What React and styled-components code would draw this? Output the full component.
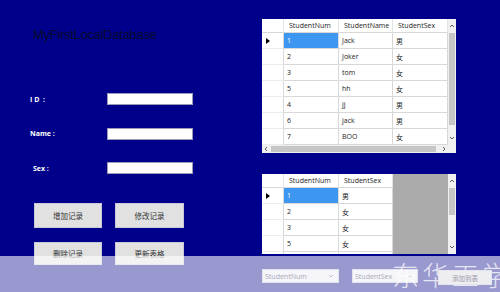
import React from 'react';
import styled, { createGlobalStyle } from 'styled-components';

const GlobalStyle = createGlobalStyle`
  html, body {
    margin: 0;
    padding: 0;
    background: #00008b;
  }
  body {
    font-family: "Open Sans", "Noto Sans CJK SC", sans-serif;
  }
`;

const gridOne = {
  columns: ['StudentNum', 'StudentName', 'StudentSex'],
  widths: '22px 55px 54px 55px',
  rows: [
    ['1', 'Jack', '男'],
    ['2', 'Joker', '女'],
    ['3', 'tom', '女'],
    ['5', 'hh', '女'],
    ['4', 'jj', '男'],
    ['6', 'jack', '男'],
    ['7', 'BOO', '女']
  ]
};

const gridTwo = {
  columns: ['StudentNum', 'StudentSex'],
  widths: '22px 55px 54px',
  rows: [
    ['1', '男'],
    ['2', '女'],
    ['3', '女'],
    ['5', '女'],
    ['4', '男']
  ]
};

const Arrow = ({ dir }) => {
  const paths = {
    up: 'M1 4 L3 2 L5 4',
    down: 'M1 2 L3 4 L5 2',
    left: 'M4 1 L2 3 L4 5',
    right: 'M2 1 L4 3 L2 5'
  };
  return (
    <svg width="6" height="6" viewBox="0 0 6 6">
      <path d={paths[dir]} fill="none" stroke="#606060" strokeWidth="1" />
    </svg>
  );
};

const DataGrid = ({ data, height, hScroll, thumb }) => (
  <GridFrame $height={height} $hScroll={hScroll}>
    <Table $widths={data.widths}>
      <HeaderCell />
      {data.columns.map(c => <HeaderCell key={c} $text>{c}</HeaderCell>)}
      {data.rows.map((row, i) => (
        <React.Fragment key={i}>
          <RowHeader>
            {i === 0 && (
              <svg width="4" height="6" viewBox="0 0 4 6">
                <path d="M0 0 L4 3 L0 6 Z" fill="#000" />
              </svg>
            )}
          </RowHeader>
          {row.map((v, j) => (
            <Cell key={j} $selected={i === 0 && j === 0}>{v}</Cell>
          ))}
        </React.Fragment>
      ))}
    </Table>
    <VScroll>
      <ArrowBox><Arrow dir="up" /></ArrowBox>
      <Track>
        <Thumb style={{ height: thumb[1], marginTop: thumb[0] }} />
      </Track>
      <ArrowBox><Arrow dir="down" /></ArrowBox>
    </VScroll>
    {hScroll && (
      <>
        <HScroll>
          <ArrowBox $h><Arrow dir="left" /></ArrowBox>
          <HTrack><HThumb /></HTrack>
          <ArrowBox $h><Arrow dir="right" /></ArrowBox>
        </HScroll>
        <Corner />
      </>
    )}
  </GridFrame>
);

const App = () => (
  <Page>
    <GlobalStyle />
    <LeftPane>
      <Title>MyFirstLocalDatabase</Title>
      <Form>
        <Label>I D&nbsp; :</Label>
        <Field />
        <Label>Name :</Label>
        <Field />
        <Label $indent>Sex :</Label>
        <Field />
      </Form>
      <Buttons>
        <ActionButton $h={25}>增加记录</ActionButton>
        <ActionButton $h={25}>修改记录</ActionButton>
        <ActionButton $h={23}>删除记录</ActionButton>
        <ActionButton $h={23}>更新表格</ActionButton>
      </Buttons>
    </LeftPane>
    <RightPane>
      <DataGrid data={gridOne} height={134} hScroll thumb={[0, 92]} />
      <DataGrid data={gridTwo} height={80} thumb={[0, 27]} />
    </RightPane>
    <Overlay>
      <Watermark>东华工学网</Watermark>
      <Combo $w={77}>StudentNum<Arrow dir="down" /></Combo>
      <Combo $w={66}>StudentSex<Arrow dir="down" /></Combo>
      <SmallButton>添加到表</SmallButton>
    </Overlay>
  </Page>
);

const Page = styled.div`
  position: relative;
  display: flex;
  width: 500px;
  height: 292px;
  overflow: hidden;
  background: #00008b;
`;

const LeftPane = styled.div`
  width: 232px;
  padding: 28px 0 0 30px;
  display: flex;
  flex-direction: column;
`;

const Title = styled.div`
  font-family: "Liberation Sans", Arial, sans-serif;
  font-size: 13px;
  line-height: 14px;
  letter-spacing: -0.3px;
  color: #08082e;
  padding-left: 3px;
`;

const Form = styled.div`
  display: grid;
  grid-template-columns: 77px 86px;
  grid-auto-rows: 12px;
  row-gap: 22.5px;
  margin-top: 51px;
  align-items: center;
`;

const Label = styled.div`
  font-family: "Open Sans", sans-serif;
  font-weight: 700;
  font-size: 7px;
  color: #ffffff;
  padding-left: ${p => (p.$indent ? '3px' : '0')};
  white-space: nowrap;
`;

const Field = styled.div`
  height: 12px;
  box-sizing: border-box;
  background: #ffffff;
  border: 1px solid #9a9ab8;
`;

const Buttons = styled.div`
  display: grid;
  grid-template-columns: 68px 69px;
  grid-template-rows: 25px 23px;
  column-gap: 13px;
  row-gap: 14px;
  margin: 29px 0 0 4px;
`;

const ActionButton = styled.div`
  height: ${p => p.$h}px;
  box-sizing: border-box;
  background: #e1e1e1;
  border: 1px solid #c8c8d8;
  display: flex;
  align-items: center;
  justify-content: center;
  font-family: "Noto Sans CJK SC", sans-serif;
  font-size: 7.5px;
  color: #333;
`;

const RightPane = styled.div`
  display: flex;
  flex-direction: column;
  gap: 21px;
  padding-top: 19px;
`;

const GridFrame = styled.div`
  width: 194px;
  height: ${p => p.$height}px;
  display: grid;
  grid-template-columns: 186px 8px;
  grid-template-rows: ${p => (p.$hScroll ? '1fr 8px' : '1fr')};
  background: #ffffff;
  overflow: hidden;
`;

const Table = styled.div`
  display: grid;
  grid-template-columns: ${p => p.$widths};
  grid-template-rows: 14px;
  grid-auto-rows: 16px;
  align-content: start;
  background: #ababab;
  overflow: hidden;
  font-family: "Open Sans", "Noto Sans CJK SC", sans-serif;
  font-size: 7px;
  color: #222;
`;

const HeaderCell = styled.div`
  background: #ffffff;
  border-right: 1px solid #e4e4e4;
  border-bottom: 1px solid #d8d8d8;
  box-sizing: border-box;
  display: flex;
  align-items: center;
  padding-left: ${p => (p.$text ? '5px' : '0')};
  white-space: nowrap;
`;

const RowHeader = styled.div`
  background: #ffffff;
  border-right: 1px solid #d8d8d8;
  border-bottom: 1px solid #ececec;
  box-sizing: border-box;
  display: flex;
  align-items: center;
  padding-left: 4px;
`;

const Cell = styled.div`
  background: ${p => (p.$selected ? '#3d96ef' : '#ffffff')};
  color: ${p => (p.$selected ? '#ffffff' : '#222')};
  border-right: 1px solid #d8d8d8;
  border-bottom: 1px solid #d8d8d8;
  box-sizing: border-box;
  display: flex;
  align-items: center;
  padding-left: 3px;
  white-space: nowrap;
`;

const VScroll = styled.div`
  display: flex;
  flex-direction: column;
  background: #f0f0f0;
`;

const ArrowBox = styled.div`
  flex: 0 0 ${p => (p.$h ? '8px' : '14px')};
  display: flex;
  align-items: center;
  justify-content: center;
`;

const Track = styled.div`
  flex: 1;
  display: flex;
  flex-direction: column;
`;

const Thumb = styled.div`
  background: #c6c6c6;
  margin: 0 1px;
`;

const HScroll = styled.div`
  display: flex;
  background: #f0f0f0;
`;

const HTrack = styled.div`
  flex: 1;
  display: flex;
  align-items: center;
`;

const HThumb = styled.div`
  height: 6px;
  width: 165px;
  background: #c6c6c6;
  margin-left: 1px;
`;

const Corner = styled.div`
  background: #f0f0f0;
`;

const Overlay = styled.div`
  position: absolute;
  left: 0;
  right: 0;
  bottom: 0;
  height: 36px;
  background: rgba(255, 255, 255, 0.6);
  display: flex;
  align-items: flex-start;
  padding: 13px 0 0 262px;
  box-sizing: border-box;
`;

const Combo = styled.div`
  width: ${p => p.$w}px;
  height: 14px;
  box-sizing: border-box;
  background: #f6f6fa;
  border: 1px solid #e2e2ee;
  margin-right: ${p => (p.$w === 77 ? '13px' : '20px')};
  display: flex;
  align-items: center;
  justify-content: space-between;
  padding: 0 4px 0 2px;
  font-family: "Open Sans", sans-serif;
  font-size: 7px;
  color: #a8a8b8;
  svg path { stroke: #c0c0c8; }
`;

const SmallButton = styled.div`
  position: relative;
  z-index: 1;
  width: 54px;
  height: 15px;
  margin-top: 1px;
  box-sizing: border-box;
  background: #eeeef2;
  border: 1px solid #e4e4ec;
  display: flex;
  align-items: center;
  justify-content: center;
  font-family: "Noto Sans CJK SC", sans-serif;
  font-size: 6.5px;
  color: #9a9aa8;
`;

const Watermark = styled.div`
  position: absolute;
  left: 392px;
  top: 2px;
  font-family: "Noto Sans CJK SC", sans-serif;
  font-weight: 300;
  font-size: 27px;
  line-height: 34px;
  letter-spacing: 3px;
  color: rgba(255, 255, 255, 0.75);
  white-space: nowrap;
  pointer-events: none;
`;

export default App;
